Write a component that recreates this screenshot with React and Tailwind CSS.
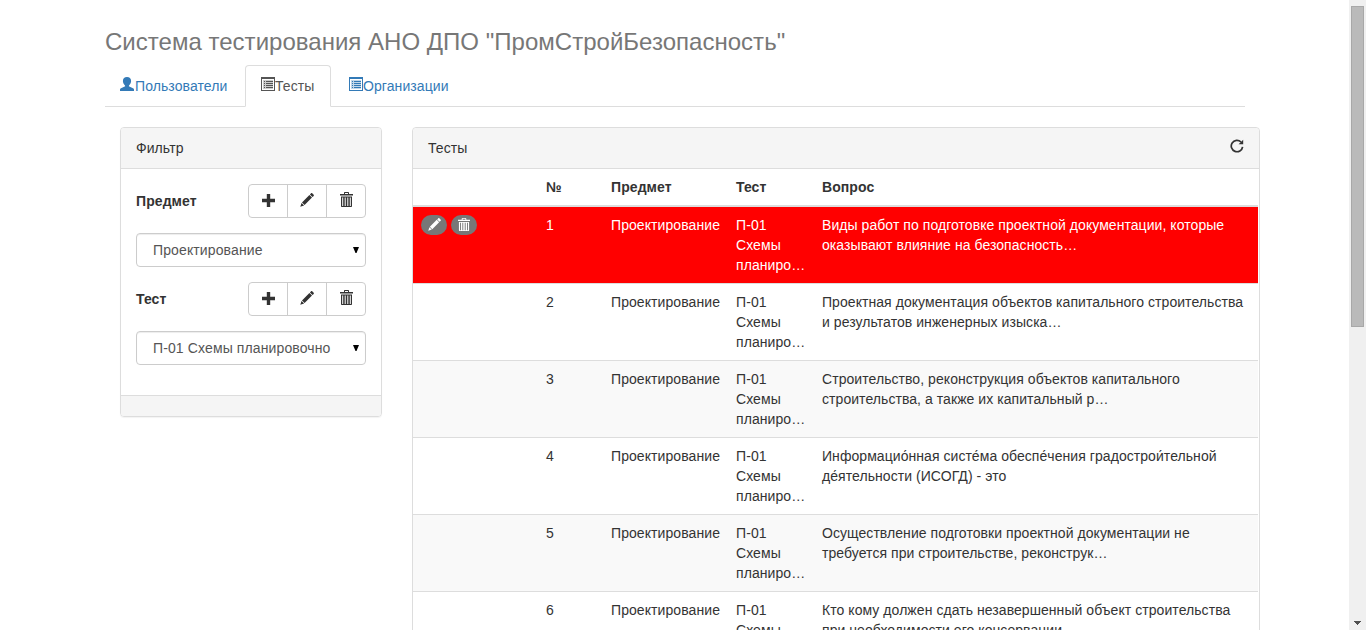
const TABS = [
  { key: 'users', label: 'Пользователи', icon: UserIcon, width: 'w-[138px]' },
  { key: 'tests', label: 'Тесты', icon: ListIcon, width: 'w-[86px]' },
  { key: 'orgs', label: 'Организации', icon: ListIcon, width: 'w-[132px]' },
]

const FILTERS = [
  { label: 'Предмет', value: 'Проектирование' },
  { label: 'Тест', value: 'П-01 Схемы планировочно' },
]

const QUESTIONS = [
  'Виды работ по подготовке проектной документации, которые оказывают влияние на безопасность…',
  'Проектная документация объектов капитального строительства и результатов инженерных изыска…',
  'Строительство, реконструкция объектов капитального строительства, а также их капитальный р…',
  'Информацио́нная систе́ма обеспе́чения градострои́тельной де́ятельности (ИСОГД) - это',
  'Осуществление подготовки проектной документации не требуется при строительстве, реконструк…',
  'Кто кому должен сдать незавершенный объект строительства при необходимости его консервации',
]

function UserIcon() {
  return (
    <svg width="14" height="14" viewBox="0 0 14 14" fill="currentColor" className="-ml-px mr-px mt-px shrink-0">
      <path d="M7 0C4.500 0 2.900 1.500 2.900 4c0 1.900.9 3.400 2.100 4.400.3.400.2.900-.3 1.200L1 11.200c-.7.300-1 .7-1 1.300V14h14v-1.500c0-.6-.3-1-1-1.300L9.300 9.600c-.5-.3-.6-.8-.3-1.200C10.200 7.400 11.100 5.900 11.100 4 11.100 1.500 9.500 0 7 0z" />
    </svg>
  )
}

function ListIcon() {
  return (
    <svg width="14" height="14" viewBox="0 0 14 14" fill="currentColor" shapeRendering="crispEdges" className="mt-px shrink-0">
      <path fillRule="evenodd" d="M0 0h14v14H0zM1 2v11h12V2z" />
      <path d="M3 4h1v1H3zM5 4h7v1H5zM3 6h1v1H3zM5 6h7v1H5zM3 8h1v1H3zM5 8h7v1H5zM3 10h1v1H3zM5 10h7v1H5z" />
      <path opacity="0.3" d="M2 3h10v9H2z" />
    </svg>
  )
}

function PlusIcon() {
  return (
    <svg width="13" height="13" viewBox="0 0 13 13" fill="currentColor">
      <path d="M4.800 0h3.400v4.800H13v3.400H8.200V13H4.800V8.200H0V4.800h4.800z" />
    </svg>
  )
}

function PencilIcon({ size = 14 }) {
  return (
    <svg width={size} height={size} viewBox="0 0 14 14" fill="currentColor">
      <path d="M11.100.3c.3-.3.800-.3 1.100 0l1.500 1.500c.3.300.3.800 0 1.100l-1.200 1.200L9.900 1.500zM9.400 2l2.600 2.600-7.400 7.400L2 9.400zM1.500 9.900l2.600 2.600L.3 13.700z" />
    </svg>
  )
}

function TrashIcon({ className = 'h-[15px] w-[13px]' }) {
  return (
    <svg viewBox="0 0 13 15" preserveAspectRatio="none" fill="currentColor" className={className}>
      <path fillRule="evenodd" d="M4 1c0-.6.400-1 1-1h3c.6 0 1 .4 1 1v1h4v1.500H0V2h4zM5 1v1h3V1z" />
      <path fillRule="evenodd" d="M1 4.500h11V14c0 .6-.4 1-1 1H2c-.6 0-1-.4-1-1zM2.200 5.500V14h1V5.500zM4.700 5.500V14h1V5.500zM7.300 5.500V14h1V5.500zM9.800 5.500V14h1V5.500z" />
    </svg>
  )
}

function RefreshIcon() {
  return (
    <svg width="14" height="14" viewBox="0 0 14 14" fill="none" stroke="currentColor" strokeWidth="1.700" className="mt-px">
      <path d="M11 3A5.700 5.700 0 1 0 12.600 7.800" />
      <path d="M13.200.7v4.600H8.600z" fill="currentColor" stroke="none" />
    </svg>
  )
}

function FilterGroup({ label, value }) {
  return (
    <div className="mb-[15px]">
      <div className="flex items-center justify-between">
        <label className="font-bold">{label}</label>
        <div className="flex h-[34px] w-[118px] divide-x divide-[#ccc] overflow-hidden rounded border border-[#ccc]">
          <button className="flex w-[39px] items-center justify-center pb-px"><PlusIcon /></button>
          <button className="flex w-[39px] items-center justify-center pb-0.5"><PencilIcon /></button>
          <button className="flex flex-1 items-center justify-center pb-[3px]"><TrashIcon /></button>
        </div>
      </div>
      <button className="mt-[15px] flex h-[34px] w-full items-center justify-between rounded border border-[#ccc] pr-1.5 pl-4 text-[#555] shadow-[inset_0_1px_1px_rgba(0,0,0,0.075)]">
        <span className="tracking-[0.12px]">{value}</span>
        <svg width="6" height="6" viewBox="0 0 6 6" className="text-black">
          <path d="M0 0h6L3.500 6h-1z" fill="currentColor" />
        </svg>
      </button>
    </div>
  )
}

function Scrollbar() {
  return (
    <div className="flex w-[17px] shrink-0 flex-col items-center justify-between bg-[#f0f0f0] pt-1.5 pb-[5px]">
      <div className="h-[321px] w-[13px] border border-[#a8a8a8] bg-[#bababa]" />
      <svg width="7" height="4" viewBox="0 0 7 4" shapeRendering="crispEdges">
        <path d="M0 0h7L3.500 4z" fill="#505050" />
      </svg>
    </div>
  )
}

export default function App() {
  return (
    <div className="flex h-[630px] overflow-hidden bg-white font-['Liberation_Sans',Arial,sans-serif] text-sm leading-5 tracking-[0.08px] text-[#333]">
      <div className="min-w-0 flex-1 pl-[105px]">
        <h3 className="pt-7 text-2xl leading-[27px] tracking-[0.02px] text-[#777]">
          Система тестирования АНО ДПО "ПромСтройБезопасность"
        </h3>

        {/* Tabs */}
        <nav className="mt-2.5 flex h-[42px] w-[1140px] gap-0.5 border-b border-[#ddd]">
          {TABS.map((t) => (
            <a
              key={t.key}
              className={`flex h-[42px] shrink-0 rounded-t border px-[15px] pt-2.5 ${t.width} ${
                t.key === 'tests'
                  ? 'border-[#ddd] border-b-white bg-white text-[#555]'
                  : 'border-transparent text-[#337ab7]'
              }`}
            >
              <t.icon />
              <span>{t.label}</span>
            </a>
          ))}
        </nav>

        <div className="flex items-start gap-[30px] pt-5 pl-[15px]">
          {/* Filter */}
          <section className="w-[262px] shrink-0 overflow-hidden rounded border border-[#ddd] shadow-[0_1px_1px_rgba(0,0,0,0.05)]">
            <header className="h-[41px] border-b border-[#ddd] bg-[#f5f5f5] px-[15px] py-2.5">Фильтр</header>
            <div className="h-[226px] p-[15px]">
              {FILTERS.map((f) => <FilterGroup key={f.label} {...f} />)}
            </div>
            <footer className="h-[21px] border-t border-[#ddd] bg-[#f5f5f5]" />
          </section>

          {/* Questions */}
          <section className="w-[848px] shrink-0 rounded border border-[#ddd]">
            <header className="flex h-[41px] justify-between rounded-t border-b border-[#ddd] bg-[#f5f5f5] px-[15px] py-2.5">
              <span>Тесты</span>
              <RefreshIcon />
            </header>
            <table className="w-[845px] table-fixed border-separate border-spacing-0">
              <colgroup>
                <col className="w-[125px]" />
                <col className="w-[65px]" />
                <col className="w-[125px]" />
                <col className="w-[86px]" />
                <col />
              </colgroup>
              <thead>
                <tr className="text-left *:border-b-2 *:border-[#ddd] *:p-2">
                  <th />
                  <th>№</th>
                  <th>Предмет</th>
                  <th>Тест</th>
                  <th>Вопрос</th>
                </tr>
              </thead>
              <tbody>
                {QUESTIONS.map((q, i) => (
                  <tr
                    key={q}
                    className={`align-top *:border-b *:border-[#ddd] *:p-2 ${
                      i === 0 ? 'bg-[red] text-white' : i % 2 === 0 ? 'bg-[#f9f9f9]' : 'bg-white'
                    }`}
                  >
                    <td>
                      {i === 0 && (
                        <div className="flex gap-1">
                          <span className="flex h-5 w-[26px] items-center justify-center rounded-full bg-[#777] pb-px"><PencilIcon size={13} /></span>
                          <span className="flex h-5 w-[26px] items-center justify-center rounded-full bg-[#777] pb-px"><TrashIcon className="h-[13px] w-[12px]" /></span>
                        </div>
                      )}
                    </td>
                    <td>{i + 1}</td>
                    <td>Проектирование</td>
                    <td>П-01<br />Схемы<br />планиро…</td>
                    <td className="tracking-[0.06px]">{q}</td>
                  </tr>
                ))}
              </tbody>
            </table>
          </section>
        </div>
      </div>
      <Scrollbar />
    </div>
  )
}
